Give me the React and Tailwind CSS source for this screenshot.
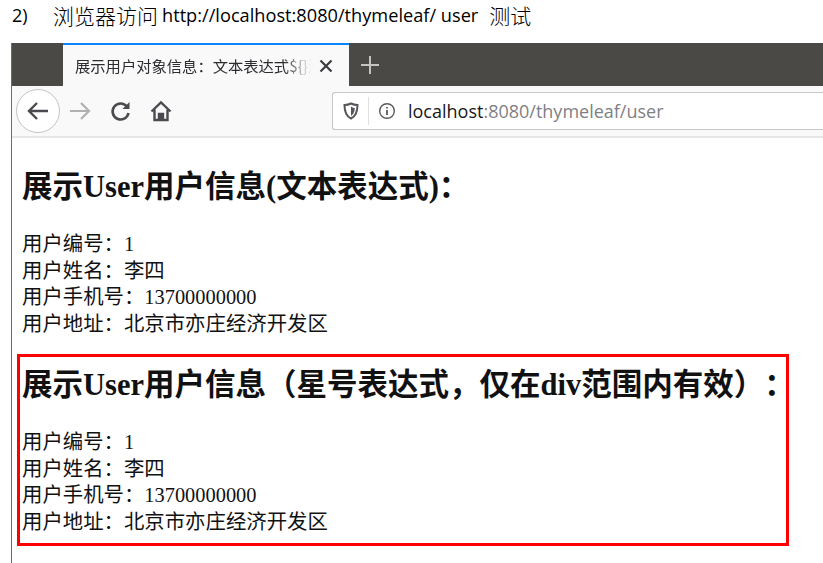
import React from 'react';

const SERIF = "font-['Liberation_Serif','Noto_Sans_CJK_SC',serif] [text-spacing-trim:space-all]";

function InfoLines() {
  return (
    <div className="text-[20.4px] leading-[26.7px] text-[#111]">
      <p>用户编号：1</p>
      <p>用户姓名：李四</p>
      <p>用户手机号：13700000000</p>
      <p>用户地址：北京市亦庄经济开发区</p>
    </div>
  );
}

function Toolbar() {
  return (
    <div className="flex h-[52px] items-center border-b-2 border-[#e6e6e6] bg-[#f9f9fa]">
      <div className="ml-[4px] flex h-[44px] w-[44px] items-center justify-center rounded-full border border-[#c4c4c4] bg-white">
        <svg width="24" height="24" viewBox="0 0 24 24" fill="none" stroke="#4a4a4f" strokeWidth="2.4">
          <path d="M22 12H3M11 4l-8 8 8 8" />
        </svg>
      </div>
      <svg className="ml-[8px]" width="24" height="24" viewBox="0 0 24 24" fill="none" stroke="#b1b1b3" strokeWidth="2.2">
        <path d="M2 12h19M13 4l8 8-8 8" />
      </svg>
      <svg className="ml-[18px]" width="22" height="22" viewBox="0 0 22 22" fill="none" stroke="#4a4a4f" strokeWidth="2.6">
        <path d="M18.5 13a8 8 0 1 1-1.6-6.5" />
        <path d="M19.5 2v7h-7" fill="#4a4a4f" stroke="none" />
      </svg>
      <svg className="ml-[18px]" width="22" height="22" viewBox="0 0 22 22" fill="none" stroke="#4a4a4f" strokeWidth="2.4">
        <path d="M1.5 11.5 11 2.5l9.5 9" />
        <path d="M4.5 9.5V20h13V9.5" />
        <path d="M9 20v-6h4v6" fill="#4a4a4f" />
      </svg>
      <div className="ml-[160px] flex h-[38px] flex-1 items-center rounded-l-[3px] border border-r-0 border-[#c6c6c8] bg-white">
        <svg className="ml-[10px]" width="16" height="18" viewBox="0 0 16 18" fill="none" stroke="#55555a" strokeWidth="2">
          <path d="M8 1.5c2 1 4 1.5 6.5 1.5 0 6-1 11-6.5 13.5C2.500 14 1.500 9 1.500 3 4 3 6 2.500 8 1.500Z" />
          <path d="M8 4.500v9.500c2.500-1.500 3.700-4.500 3.800-8-1.500 0-2.500-.7-3.800-1.500Z" fill="#55555a" stroke="none" />
        </svg>
        <div className="ml-[9px] h-[28px] w-px bg-[#e0e0e2]" />
        <svg className="ml-[9px]" width="18" height="18" viewBox="0 0 18 18" fill="none" stroke="#5a5a5f" strokeWidth="1.400">
          <circle cx="9" cy="9" r="7.300" />
          <path d="M9 8v5M9 5v1.600" strokeWidth="1.800" />
        </svg>
        <p className="ml-[12px] font-['Open_Sans',sans-serif] text-[18px] text-[#7f7f84]">
          <span className="text-[#17171a]">localhost</span>:8080/thymeleaf/user
        </p>
      </div>
    </div>
  );
}

function TabBar() {
  return (
    <div className="flex h-[43px] bg-[#4a4946]">
      <div className="ml-[51px] flex w-[286px] items-center border-t-2 border-[#0a84ff] bg-[#f9f9fa]">
        <p className="ml-[12px] w-[237px] overflow-hidden whitespace-nowrap font-['Noto_Sans_CJK_SC',sans-serif] text-[15.300px] text-[#2c2c30] [mask-image:linear-gradient(to_right,black_88%,transparent)] [text-spacing-trim:space-all]">
          展示用户对象信息：文本表达式${'{'}{'}'}测试
        </p>
        <svg className="ml-[7px]" width="14" height="14" viewBox="0 0 14 14" stroke="#3c3c40" strokeWidth="2.200">
          <path d="M1.500 1.500l11 11M12.500 1.500l-11 11" />
        </svg>
      </div>
      <svg className="ml-[11px] mt-[12px]" width="20" height="20" viewBox="0 0 20 20" stroke="#c4c4c2" strokeWidth="2">
        <path d="M10 1v18M1 10h18" />
      </svg>
    </div>
  );
}

export default function App() {
  return (
    <div className="h-[563px] w-[823px] overflow-hidden bg-white">
      <p className="flex h-[43px] items-start pl-[12px] pt-[2px] font-['Open_Sans','Noto_Sans_CJK_SC',sans-serif] text-[18px] leading-[26px] text-black">
        <span className="w-[41px]">2)</span>
        <span className="text-[21px] font-['Noto_Sans_CJK_SC',serif] font-light">浏览器访问</span>
        <span className="ml-[4px] text-[18.200px]">http://localhost:8080/thymeleaf/ user</span>
        <span className="ml-[11px] text-[21px] font-['Noto_Sans_CJK_SC',serif] font-light">测试</span>
      </p>
      <div className="ml-[11px] h-[520px] border-l border-[#6b6b6b]">
        <TabBar />
        <Toolbar />
        <div className={SERIF}>
          <h2 className="ml-[10px] mt-[29px] text-[30.500px] font-bold leading-[40px] text-[#111]">
            展示User用户信息(文本表达式)：
          </h2>
          <div className="ml-[10px] mt-[24px]">
            <InfoLines />
          </div>
          <div className="ml-[5px] mt-[16px] h-[192px] w-[772px] border-[3px] border-[#fe0000] pl-[2px]">
            <h2 className="mt-[8px] whitespace-nowrap text-[30.500px] font-bold leading-[40px] text-[#111]">
              展示User用户信息（星号表达式，仅在div范围内有效）：
            </h2>
            <div className="mt-[24px]">
              <InfoLines />
            </div>
          </div>
        </div>
      </div>
    </div>
  );
}
